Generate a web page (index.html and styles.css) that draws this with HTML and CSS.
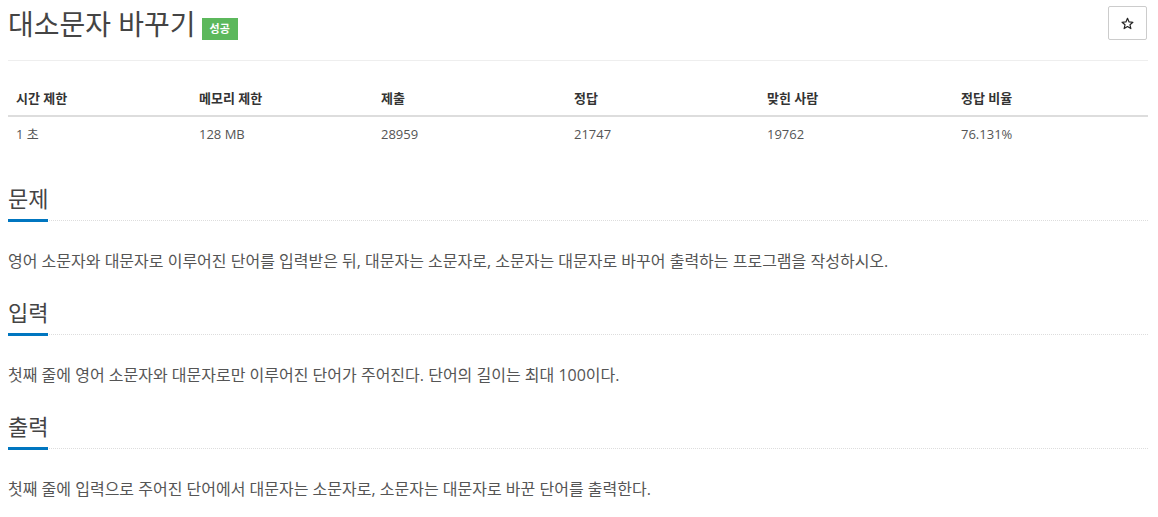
FILE: index.html
```html
<!DOCTYPE html>
<html lang="ko">
<head>
<meta charset="utf-8">
<title>대소문자 바꾸기</title>
<link rel="stylesheet" href="styles.css">
</head>
<body>
<div class="page">
  <div class="page-header">
    <h1 class="title">대소문자 바꾸기 <span class="label-ok">성공</span></h1>
    <button class="star-btn" type="button" title="즐겨찾기">
      <svg width="13" height="13" viewBox="0 0 24 24"><path d="M12 2.5l2.9 6.6 7.1.6-5.4 4.7 1.6 7-6.2-3.7-6.2 3.7 1.6-7L2 9.7l7.1-.6z" fill="none" stroke="#222" stroke-width="2.2" stroke-linejoin="round"/></svg>
    </button>
  </div>

  <table class="info">
    <thead>
      <tr><th>시간 제한</th><th>메모리 제한</th><th>제출</th><th>정답</th><th>맞힌 사람</th><th>정답 비율</th></tr>
    </thead>
    <tbody>
      <tr><td>1 초</td><td>128 MB</td><td>28959</td><td>21747</td><td>19762</td><td>76.131%</td></tr>
    </tbody>
  </table>

  <div class="section">
    <h2 class="headline"><span>문제</span></h2>
    <p class="text">영어 소문자와 대문자로 이루어진 단어를 입력받은 뒤, 대문자는 소문자로, 소문자는 대문자로 바꾸어 출력하는 프로그램을 작성하시오.</p>
  </div>
  <div class="section">
    <h2 class="headline"><span>입력</span></h2>
    <p class="text">첫째 줄에 영어 소문자와 대문자로만 이루어진 단어가 주어진다. 단어의 길이는 최대 100이다.</p>
  </div>
  <div class="section">
    <h2 class="headline"><span>출력</span></h2>
    <p class="text">첫째 줄에 입력으로 주어진 단어에서 대문자는 소문자로, 소문자는 대문자로 바꾼 단어를 출력한다.</p>
  </div>
</div>
</body>
</html>
```

FILE: styles.css
```css
body {
	margin		: 0;
	background	: white;
	color		: #555;
	font-family	: "Open Sans", "Noto Sans CJK KR", sans-serif;
}
.page {
	padding		: 0 10px 0 8px;
}

/* title bar */
.page-header {
	display		: flex;
	justify-content	: space-between;
	align-items	: flex-start;
	padding		: 6px 0 18px;
	border-bottom	: 1px solid #eee;
}
.title {
	display		: flex;
	align-items	: flex-start;
	margin		: 0;
	font-size	: 28px;
	line-height	: 36px;
	font-weight	: normal;
	color		: #444;
}
.label-ok {
	margin		: 12px 0 0 6px;
	padding		: 0 8px;
	background	: #5cb85c;
	color		: white;
	font-size	: 11px;
	font-weight	: bold;
	line-height	: 22px;
}
.star-btn {
	display		: flex;
	align-items	: center;
	justify-content	: center;
	width		: 39px;
	height		: 34px;
	margin-right	: 1px;
	padding		: 0;
	background	: white;
	border		: 1px solid #ccc;
	border-radius	: 2px;
}

/* limits table */
.info {
	width		: 100%;
	margin		: 20px 0 35px;
	border-collapse	: collapse;
	table-layout	: fixed;
	font-size	: 13px;
	line-height	: 18px;
}
.info th, .info td {
	padding		: 8px;
	text-align	: left;
}
.info th {
	color		: #333;
	font-weight	: bold;
	border-bottom	: 2px solid #ddd;
}
.info th:nth-child(1) { width: 167px; }
.info th:nth-child(2) { width: 166px; }
.info th:nth-child(3) { width: 177px; }
.info th:nth-child(4) { width: 177px; }
.info th:nth-child(5) { width: 178px; }

/* sections */
.section {
	margin-bottom	: 27px;
}
.headline {
	display		: flex;
	margin		: 0;
	font-size	: 22px;
	line-height	: 24px;
	font-weight	: normal;
	color		: #444;
	border-bottom	: 1px dotted #ddd;
}
.headline span {
	padding-bottom	: 9px;
	margin-bottom	: -2px;
	border-bottom	: 3px solid #0076c0;
}
.text {
	margin		: 28px 0 0;
	font-size	: 16px;
	line-height	: 24px;
}
```
